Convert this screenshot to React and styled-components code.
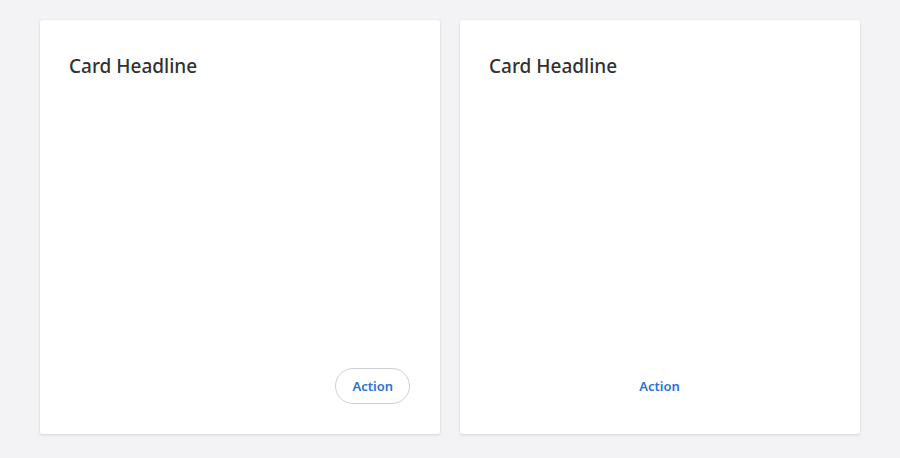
import React from 'react';
import styled, { createGlobalStyle } from 'styled-components';

const GlobalStyle = createGlobalStyle`
  html, body {
    margin: 0;
    padding: 0;
    background: #f3f3f5;
    font-family: "Noto Sans", "Open Sans", sans-serif;
  }
`;

const Page = styled.main`
  display: grid;
  grid-template-columns: 400px 400px;
  gap: 20px;
  padding: 20px 40px 24px;
  height: 458px;
  box-sizing: border-box;
`;

const Card = styled.section`
  display: flex;
  flex-direction: column;
  background: #fff;
  border-radius: 2px;
  box-shadow: 0 1px 3px rgba(0, 0, 0, 0.13), 0 0 1px rgba(0, 0, 0, 0.08);
  padding: 32px 30px 30px 29px;
`;

const Headline = styled.h2`
  margin: 0;
  font-size: 19px;
  line-height: 28px;
  font-weight: 500;
  color: #323130;
  flex: 1;
`;

const Footer = styled.div`
  display: flex;
  justify-content: ${p => (p.$center ? 'center' : 'flex-end')};
`;

const ActionButton = styled.button`
  font-family: inherit;
  font-size: 13px;
  font-weight: 600;
  color: #2673d9;
  background: transparent;
  height: 36px;
  padding: 0 16px;
  border-radius: 18px;
  border: 1px solid ${p => (p.$outlined ? '#cfcfd3' : 'transparent')};
  cursor: pointer;
`;

export default function App() {
  return (
    <>
      <GlobalStyle />
      <Page>
        <Card>
          <Headline>Card Headline</Headline>
          <Footer>
            <ActionButton $outlined>Action</ActionButton>
          </Footer>
        </Card>
        <Card>
          <Headline>Card Headline</Headline>
          <Footer $center>
            <ActionButton>Action</ActionButton>
          </Footer>
        </Card>
      </Page>
    </>
  );
}
